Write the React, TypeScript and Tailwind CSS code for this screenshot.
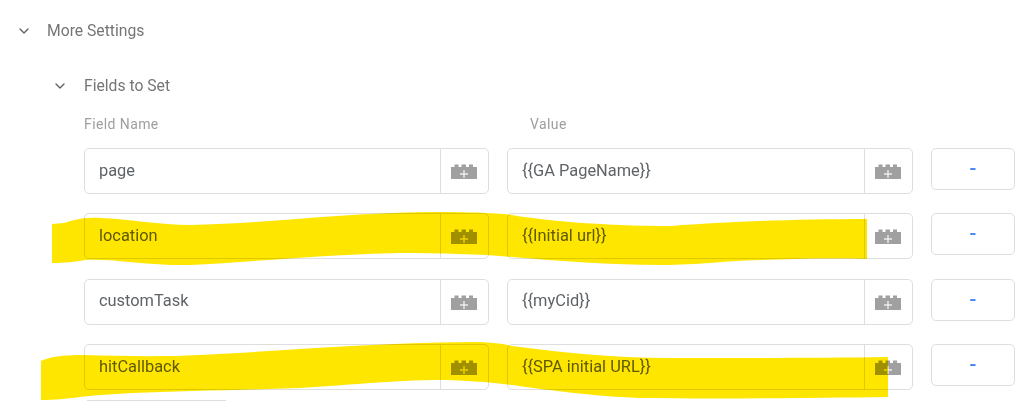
import { ChevronDown } from "lucide-react"

const rows = [
  { name: "page", value: "{{GA PageName}}" },
  { name: "location", value: "{{Initial url}}" },
  { name: "customTask", value: "{{myCid}}" },
  { name: "hitCallback", value: "{{SPA initial URL}}" },
]

function BrickIcon() {
  return (
    <svg width="26" height="15" viewBox="0 0 26 15" className="block">
      <path
        d="M0 3h3.500V0.500h4V3h3V0.500h4.500V3h3V0.500h4V3H26v12H0z"
        fill="#a0a0a0"
      />
      <path d="M12.300 6h1.400v3.300H17v1.400h-3.300V14h-1.400v-3.300H9V9.300h3.300z" fill="#ececec" />
    </svg>
  )
}

function VariableInput({ text, className }: { text: string; className: string }) {
  return (
    <div className={`flex h-[46px] rounded-[5px] border border-[#dedede] bg-white ${className}`}>
      <div className="flex flex-1 items-center pl-[14px] text-[16.4px] text-[#5f6368]">{text}</div>
      <div className="flex w-[48px] items-center justify-center border-l border-[#dedede] pr-[1px] pt-[1px]">
        <BrickIcon />
      </div>
    </div>
  )
}

export default function App() {
  return (
    <div className="relative h-[403px] w-[1024px] overflow-hidden bg-white font-['Roboto',sans-serif] blur-[0.4px]">
      <div className="flex h-[62px] items-center pl-[16px] text-[15.7px] text-[#757575]">
        <ChevronDown size={16} strokeWidth={2} className="mr-[15px] text-[#616161]" />
        More Settings
      </div>
      <div className="flex h-[48px] items-center pl-[52px] text-[15.7px] text-[#757575]">
        <ChevronDown size={16} strokeWidth={2} className="mr-[16px] text-[#616161]" />
        Fields to Set
      </div>
      <div className="flex h-[28px] items-center pl-[84px] text-[14px] tracking-[0.4px] text-[#9e9e9e]">
        <span className="w-[446px]">Field Name</span>
        <span>Value</span>
      </div>
      <div className="mt-[10px] flex flex-col gap-[19.33px] pl-[84px]">
        {rows.map((row) => (
          <div key={row.name} className="flex items-start">
            <VariableInput text={row.name} className="w-[405px]" />
            <VariableInput text={row.value} className="ml-[18px] w-[406px]" />
            <div className="ml-[18px] flex h-[42px] w-[84px] items-center justify-center rounded-[5px] border border-[#dedede] bg-white pb-[2px] text-[20px] font-medium text-[#4285f4]">
              -
            </div>
          </div>
        ))}
      </div>
      <div className="mt-[10px] ml-[87px] h-[20px] w-[139px] border-t border-[#dedede]" />

      {/* marker strokes painted over the form */}
      <svg width="1024" height="403" viewBox="0 0 1024 403" className="absolute left-0 top-0 mix-blend-multiply">
        <path
          fill="#ffe600"
          d="M52 224 L64 223 C72 221 80 217 100 218 C130 219 160 225 190 225 C260 224 340 213 430 212 C470 212 500 213 512 215 C540 220 600 226 672 226 C720 222 800 219 867 219 L867 259 C830 258 790 259 762 260 C720 261 700 265 662 265 C610 265 560 261 512 257 C480 254 440 253 400 253 C320 255 250 262 190 265 C150 266 110 258 85 260 C75 262 65 263 52 263 Z"
        />
        <path
          fill="#ffe600"
          d="M41 361 C50 357 60 355 85 355 C120 356 160 357 200 355 C280 351 370 343 470 342 C490 342 505 344 512 346 C560 352 610 358 670 358 C740 358 820 358 888 357 L888 397 C810 398 720 399 640 398 C590 396 540 389 512 385 C490 382 460 380 433 380 C380 381 340 386 300 388 C240 390 180 391 133 393 C110 394 90 396 80 397 C65 399 55 400 41 400 Z"
        />
      </svg>
    </div>
  )
}
